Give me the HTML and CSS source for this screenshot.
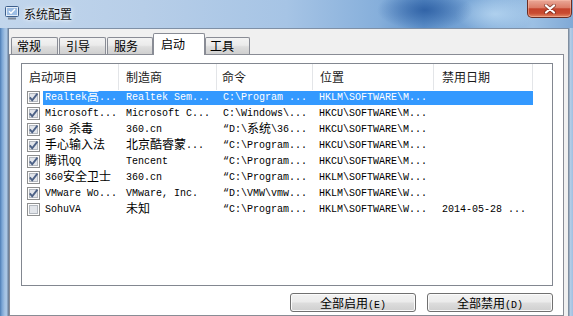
FILE: index.html
```html
<!DOCTYPE html>
<html lang="zh-CN">
<head>
<meta charset="utf-8">
<title>系统配置</title>
<link rel="stylesheet" href="styles.css">
</head>
<body>
<div class="window">
  <div class="titlebar">
    <svg class="app-icon" viewBox="0 0 16 16">
      <rect x="1.5" y="1.5" width="13" height="10" rx="1" fill="#e4edf7" stroke="#3d5f8c"/>
      <rect x="3" y="3" width="10" height="7" fill="#9cbde4"/>
      <path d="M5 6.3 L7 8.3 L11 4" fill="none" stroke="#ffffff" stroke-width="1.4"/>
      <rect x="4" y="12.5" width="8" height="2" fill="#7d8898"/>
    </svg>
    <span class="title">系统配置</span>
    <div class="close">
      <svg viewBox="0 0 12 10" class="close-x">
        <path d="M2 1.5 L10 8.5 M10 1.5 L2 8.5" stroke="#5b2015" stroke-opacity="0.55" stroke-width="4" stroke-linecap="round"/>
        <path d="M2 1.5 L10 8.5 M10 1.5 L2 8.5" stroke="#ffffff" stroke-width="2.2" stroke-linecap="round"/>
      </svg>
    </div>
  </div>
  <div class="body">
    <div class="frame-l"></div>
    <div class="client">
      <div class="tabs">
        <div class="tab t1">常规</div>
        <div class="tab t2">引导</div>
        <div class="tab t3">服务</div>
        <div class="tab sel">启动</div>
        <div class="tab t5">工具</div>
      </div>
      <div class="panel">
        <div class="lv">
          <div class="lv-head">
            <div class="hc">启动项目</div>
            <div class="hc">制造商</div>
            <div class="hc h3">命令</div>
            <div class="hc">位置</div>
            <div class="hc h5">禁用日期</div>
            <div class="hc last"></div>
          </div>

          <div class="row selected">
            <div class="cbc"><svg class="cb" viewBox="0 0 13 13"><rect x="0.5" y="0.5" width="12" height="12" fill="#fdfdfd" stroke="#8e8f8f"/><rect x="2.5" y="2.5" width="8" height="8" fill="#e2e5ea" stroke="#b3b8bf"/><path d="M2.8 6.3 L5.2 9.3 L10.4 2.6" fill="none" stroke="#4c6186" stroke-width="1.9"/></svg></div>
            <div class="cell name">Realtek<span class="c">高</span>...</div>
            <div class="cell">Realtek Sem...</div>
            <div class="cell">C:\Program ...</div>
            <div class="cell">HKLM\SOFTWARE\M...</div>
            <div class="cell d5"></div>
          </div>

          <div class="row">
            <div class="cbc"><svg class="cb" viewBox="0 0 13 13"><rect x="0.5" y="0.5" width="12" height="12" fill="#fdfdfd" stroke="#8e8f8f"/><rect x="2.5" y="2.5" width="8" height="8" fill="#e2e5ea" stroke="#b3b8bf"/><path d="M2.8 6.3 L5.2 9.3 L10.4 2.6" fill="none" stroke="#4c6186" stroke-width="1.9"/></svg></div>
            <div class="cell name">Microsoft...</div>
            <div class="cell">Microsoft C...</div>
            <div class="cell">C:\Windows\...</div>
            <div class="cell">HKCU\SOFTWARE\M...</div>
            <div class="cell d5"></div>
          </div>

          <div class="row">
            <div class="cbc"><svg class="cb" viewBox="0 0 13 13"><rect x="0.5" y="0.5" width="12" height="12" fill="#fdfdfd" stroke="#8e8f8f"/><rect x="2.5" y="2.5" width="8" height="8" fill="#e2e5ea" stroke="#b3b8bf"/><path d="M2.8 6.3 L5.2 9.3 L10.4 2.6" fill="none" stroke="#4c6186" stroke-width="1.9"/></svg></div>
            <div class="cell name">360 <span class="c">杀毒</span></div>
            <div class="cell">360.cn</div>
            <div class="cell">“D:\<span class="c">系统</span>\36...</div>
            <div class="cell">HKCU\SOFTWARE\M...</div>
            <div class="cell d5"></div>
          </div>

          <div class="row">
            <div class="cbc"><svg class="cb" viewBox="0 0 13 13"><rect x="0.5" y="0.5" width="12" height="12" fill="#fdfdfd" stroke="#8e8f8f"/><rect x="2.5" y="2.5" width="8" height="8" fill="#e2e5ea" stroke="#b3b8bf"/><path d="M2.8 6.3 L5.2 9.3 L10.4 2.6" fill="none" stroke="#4c6186" stroke-width="1.9"/></svg></div>
            <div class="cell name"><span class="c">手心输入法</span></div>
            <div class="cell"><span class="c">北京酷睿蒙</span>...</div>
            <div class="cell">“C:\Program...</div>
            <div class="cell">HKCU\SOFTWARE\M...</div>
            <div class="cell d5"></div>
          </div>

          <div class="row">
            <div class="cbc"><svg class="cb" viewBox="0 0 13 13"><rect x="0.5" y="0.5" width="12" height="12" fill="#fdfdfd" stroke="#8e8f8f"/><rect x="2.5" y="2.5" width="8" height="8" fill="#e2e5ea" stroke="#b3b8bf"/><path d="M2.8 6.3 L5.2 9.3 L10.4 2.6" fill="none" stroke="#4c6186" stroke-width="1.9"/></svg></div>
            <div class="cell name"><span class="c">腾讯</span>QQ</div>
            <div class="cell">Tencent</div>
            <div class="cell">“C:\Program...</div>
            <div class="cell">HKCU\SOFTWARE\M...</div>
            <div class="cell d5"></div>
          </div>

          <div class="row">
            <div class="cbc"><svg class="cb" viewBox="0 0 13 13"><rect x="0.5" y="0.5" width="12" height="12" fill="#fdfdfd" stroke="#8e8f8f"/><rect x="2.5" y="2.5" width="8" height="8" fill="#e2e5ea" stroke="#b3b8bf"/><path d="M2.8 6.3 L5.2 9.3 L10.4 2.6" fill="none" stroke="#4c6186" stroke-width="1.9"/></svg></div>
            <div class="cell name">360<span class="c">安全卫士</span></div>
            <div class="cell">360.cn</div>
            <div class="cell">“C:\Program...</div>
            <div class="cell">HKLM\SOFTWARE\W...</div>
            <div class="cell d5"></div>
          </div>

          <div class="row">
            <div class="cbc"><svg class="cb" viewBox="0 0 13 13"><rect x="0.5" y="0.5" width="12" height="12" fill="#fdfdfd" stroke="#8e8f8f"/><rect x="2.5" y="2.5" width="8" height="8" fill="#e2e5ea" stroke="#b3b8bf"/><path d="M2.8 6.3 L5.2 9.3 L10.4 2.6" fill="none" stroke="#4c6186" stroke-width="1.9"/></svg></div>
            <div class="cell name">VMware Wo...</div>
            <div class="cell">VMware, Inc.</div>
            <div class="cell">“D:\VMW\vmw...</div>
            <div class="cell">HKLM\SOFTWARE\W...</div>
            <div class="cell d5"></div>
          </div>

          <div class="row">
            <div class="cbc"><svg class="cb" viewBox="0 0 13 13"><rect x="0.5" y="0.5" width="12" height="12" fill="#fdfdfd" stroke="#8e8f8f"/><rect x="2.5" y="2.5" width="8" height="8" fill="#e2e5ea" stroke="#b3b8bf"/></svg></div>
            <div class="cell name">SohuVA</div>
            <div class="cell"><span class="c">未知</span></div>
            <div class="cell">“C:\Program...</div>
            <div class="cell">HKLM\SOFTWARE\W...</div>
            <div class="cell d5">2014-05-28 ...</div>
          </div>
        </div>
        <div class="buttons">
          <div class="btn">全部启用<span class="key">(E)</span></div>
          <div class="btn">全部禁用<span class="key">(D)</span></div>
        </div>
      </div>
    </div>
    <div class="frame-r"></div>
  </div>
</div>
</body>
</html>
```

FILE: styles.css
```css
html, body {
  margin: 0;
  padding: 0;
}

body {
  width: 573px;
  height: 316px;
  overflow: hidden;
  background: #9dbbe0;
  font-family: "Noto Sans CJK SC", "Liberation Sans", sans-serif;
  color: #000;
}

.window {
  display: flex;
  flex-direction: column;
  height: 316px;
}

/* ---------- title bar ---------- */
.titlebar {
  height: 28px;
  flex: none;
  display: flex;
  align-items: flex-start;
  background:
    radial-gradient(ellipse 48px 20px at 425px 10px, rgba(38, 88, 158, 0.8), rgba(38, 88, 158, 0) 100%),
    radial-gradient(ellipse 40px 18px at 495px 14px, rgba(190, 220, 245, 0.7), rgba(190, 220, 245, 0) 100%),
    linear-gradient(to right, #c2d6ec 0%, #b7cee8 25%, #a6c4e5 50%, #86afdb 66%, #5f92cb 74%, #8ab3dd 86%, #9cc0e4 93%, #80a9d6 100%);
}

.app-icon {
  width: 16px;
  height: 16px;
  margin: 5px 0 0 4px;
  flex: none;
}

.title {
  margin: 6px 0 0 4px;
  font-size: 12px;
  line-height: 16px;
  color: #111;
  text-shadow: 0 0 6px #fff, 0 0 3px rgba(255, 255, 255, 0.9);
}

.close {
  margin-left: auto;
  margin-right: 1px;
  width: 45px;
  height: 18px;
  box-sizing: border-box;
  border: 1px solid #6a2d24;
  border-top: none;
  border-radius: 0 0 5px 5px;
  background: linear-gradient(#eaa898 0%, #dc7d68 45%, #c4432c 52%, #c94b31 78%, #e38b69 100%);
  box-shadow: inset 0 0 0 1px rgba(255, 200, 180, 0.45);
  display: flex;
  align-items: center;
  justify-content: center;
}

.close-x {
  width: 12px;
  height: 10px;
}

/* ---------- body / frame ---------- */
.body {
  flex: 1;
  display: flex;
  min-height: 0;
}

.frame-l {
  width: 9px;
  flex: none;
  background: linear-gradient(to right, #4d7db4 0px, #79a4d4 2px, #a5c3e3 5px, #a9c6e5 7px, #6f839c 8px, #6f839c 9px);
}

.frame-r {
  flex: 1;
  background: linear-gradient(to right, #7f8ea0 0px, #7f8ea0 1px, #b9cfe7 2px, #9fbfe2 100%);
}

.client {
  width: 559px;
  flex: none;
  box-sizing: border-box;
  background: #f0f0f0;
  border-top: 1px solid #7f90a6;
  padding-top: 4px;
  display: flex;
  flex-direction: column;
}

/* ---------- tabs ---------- */
.tabs {
  height: 21px;
  flex: none;
  display: flex;
  align-items: flex-end;
  margin-left: 2px;
  position: relative;
  z-index: 1;
}

.tab {
  box-sizing: border-box;
  height: 17px;
  border: 1px solid #898c95;
  border-bottom: none;
  border-radius: 2px 2px 0 0;
  background: linear-gradient(#f3f3f3 0%, #ebebeb 45%, #dddddd 55%, #d0d0d0 100%);
  font-size: 12px;
  line-height: 16px;
  padding: 0 0 0 5px;
  white-space: nowrap;
  color: #000;
}

.t1 { width: 47px; margin-right: 1px; }
.t2 { width: 47px; margin-right: 1px; padding-left: 6px; }
.t3 { width: 46px; padding-left: 6px; }
.t5 { width: 45px; padding-left: 4px; }

.tab.sel {
  width: 52px;
  height: 22px;
  margin-bottom: -1px;
  background: #ffffff;
  padding: 2px 0 0 7px;
}

/* ---------- panel ---------- */
.panel {
  flex: 1;
  margin-right: 4px;
  border: 1px solid #898c95;
  background: #ffffff;
  padding: 8px 10px 0 11px;
}

.lv {
  height: 223px;
  box-sizing: border-box;
  border: 1px solid #828790;
  background: #fff;
}

.lv-head {
  display: grid;
  grid-template-columns: 97px 98px 96px 121px 99px 1fr;
  height: 26px;
}

.hc {
  font-size: 12px;
  line-height: 26px;
  padding-left: 7px;
  border-right: 1px solid #e3e5e8;
  white-space: nowrap;
  color: #1b1b1b;
}

.hc.h3 { padding-left: 5px; }
.hc.h5 { padding-left: 8px; }
.hc.last { border-right: none; }

.row {
  display: grid;
  grid-template-columns: 21px 76px 98px 96px 121px 99px 1fr;
  height: 16px;
  box-sizing: border-box;
  padding: 1px 0;
}

.cbc {
  height: 14px;
}

.cb {
  display: block;
  width: 13px;
  height: 13px;
  margin-left: 5px;
}

.cell {
  height: 14px;
  font-family: "Liberation Mono", "Noto Sans CJK SC", monospace;
  font-size: 10px;
  line-height: 14px;
  padding-left: 6px;
  white-space: nowrap;
  color: #000;
}

.cell.name { padding-left: 2px; }
.row .cell:nth-child(3) { padding-left: 7px; }
.cell.d5 { padding-left: 8px; }

.c {
  font-family: "Noto Sans CJK SC", sans-serif;
  font-size: 12px;
  line-height: 10px;
  vertical-align: -1px;
}

.row.selected .cell {
  background: #3399ff;
  color: #fff;
}

/* ---------- buttons ---------- */
.buttons {
  display: flex;
  justify-content: flex-end;
  gap: 11px;
  margin-top: 7px;
}

.btn {
  width: 126px;
  height: 19px;
  box-sizing: border-box;
  border: 1px solid #707070;
  border-radius: 3px;
  background: linear-gradient(#f2f2f2 0%, #ebebeb 48%, #dddddd 52%, #cfcfcf 100%);
  box-shadow: inset 0 0 0 1px #fbfbfb;
  font-size: 12px;
  line-height: 17px;
  text-align: center;
  color: #000;
}

.key {
  font-family: "Liberation Mono", monospace;
  font-size: 10px;
}
```
